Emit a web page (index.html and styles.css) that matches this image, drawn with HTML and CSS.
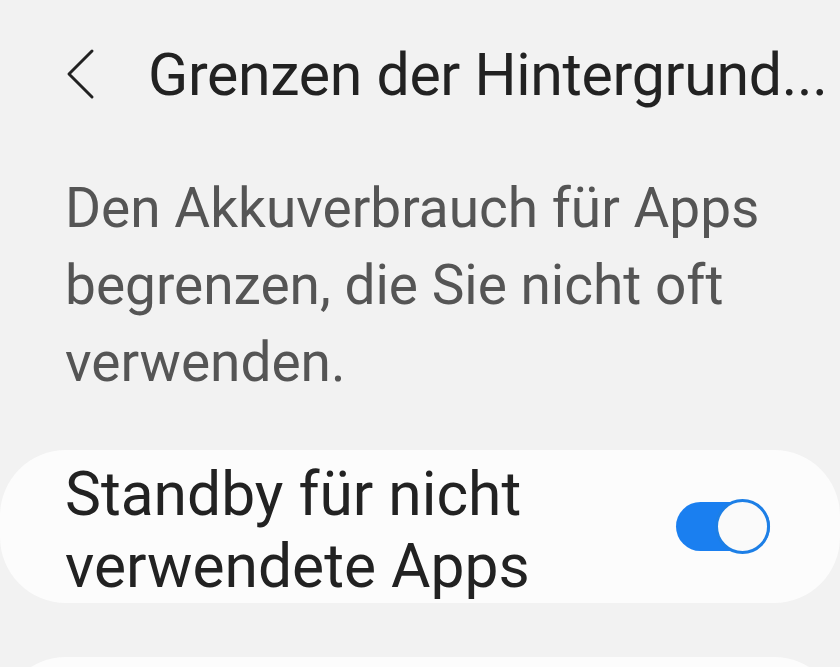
FILE: index.html
```html
<!DOCTYPE html>
<html lang="de">
<head>
  <meta charset="UTF-8" />
  <meta name="viewport" content="width=device-width, initial-scale=1" />
  <title>Grenzen der Hintergrundnutzung</title>
  <link rel="stylesheet" href="styles.css">
</head>
<body>

  <header class="topbar">
    <button class="back" aria-label="Zurück">
      <svg width="30" height="52" viewBox="0 0 30 52">
        <path d="M26 3 L3 26 L26 49" fill="none" stroke="#222" stroke-width="3" stroke-linecap="round" stroke-linejoin="round"/>
      </svg>
    </button>
    <h1>Grenzen der Hintergrund...</h1>
  </header>

  <p class="intro">Den Akkuverbrauch für Apps begrenzen, die Sie nicht oft verwenden.</p>

  <section class="card">
    <span class="card-label">Standby für nicht verwendete Apps</span>
    <span class="switch on"><span class="knob"></span></span>
  </section>

  <section class="card next"></section>

</body>
</html>
```

FILE: styles.css
```css
body {
  margin: 0;
  font-family: Roboto, "Noto Sans", sans-serif;
  background: #f2f2f2;
  color: #222;
  overflow: hidden;
  height: 100vh;
}

.topbar {
  display: flex;
  align-items: center;
  height: 100px;
  padding: 48px 0 0 66px;
  box-sizing: border-box;
}

.back {
  border: 0;
  background: none;
  padding: 0;
  width: 30px;
  height: 52px;
  margin-right: 52px;
}

.topbar h1 {
  margin: 0;
  font-size: 59px;
  font-weight: 400;
  color: #222;
  white-space: nowrap;
  letter-spacing: -0.3px;
}

.intro {
  margin: 70px 60px 0 65px;
  font-size: 55px;
  line-height: 77px;
  color: #555;
}

.card {
  margin-top: 49px;
  background: #fcfcfc;
  border-radius: 66px;
  height: 153px;
  display: flex;
  align-items: center;
  justify-content: space-between;
  padding: 0 70px 0 65px;
  box-sizing: border-box;
}

.card-label {
  font-size: 60.5px;
  line-height: 72px;
  width: 500px;
  padding-top: 8px;
}

.card.next {
  margin-top: 54px;
}

.switch {
  position: relative;
  width: 94px;
  height: 49px;
  border-radius: 25px;
  background: #1a7ff0;
  flex: none;
}

.switch .knob {
  position: absolute;
  right: 0;
  top: -3px;
  width: 49px;
  height: 49px;
  border: 3px solid #1d7fe6;
  border-radius: 50%;
  background: #fafafa;
}
```
